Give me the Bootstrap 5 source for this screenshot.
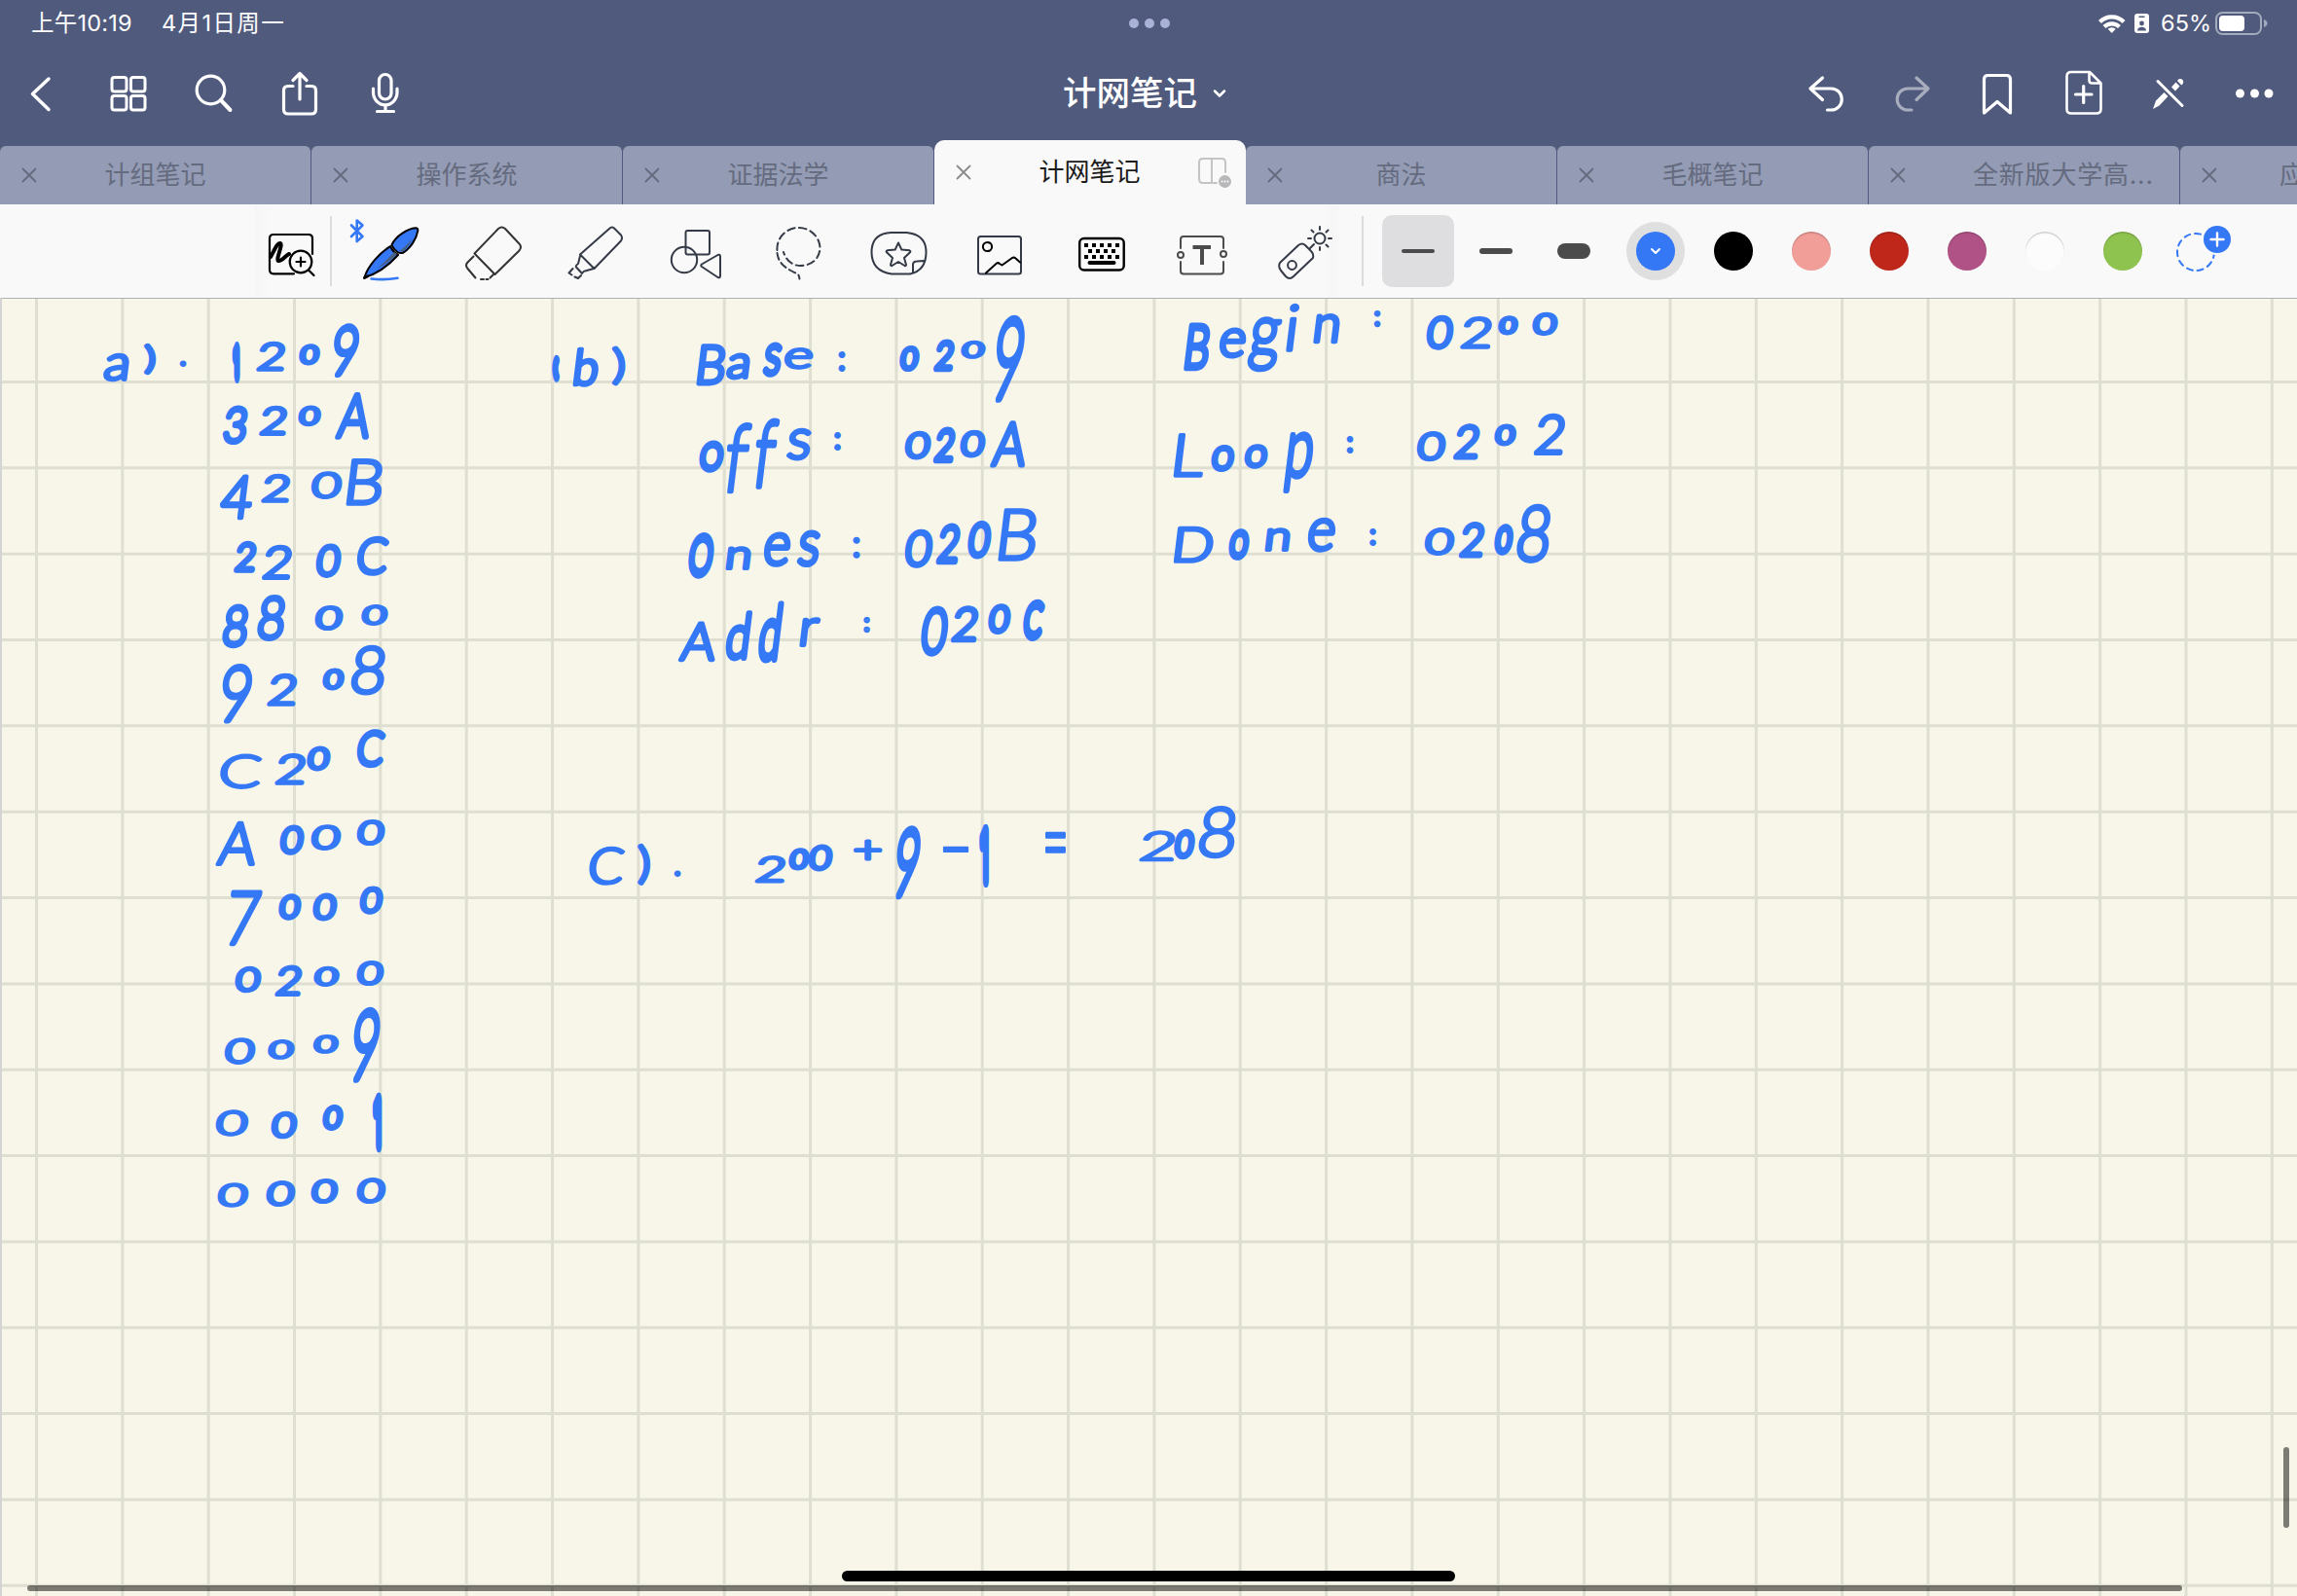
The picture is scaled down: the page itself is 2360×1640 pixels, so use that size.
<!DOCTYPE html>
<html lang="zh-CN">
<head>
<meta charset="utf-8">
<meta name="viewport" content="width=device-width, initial-scale=1">
<title>计网笔记</title>
<link href="https://cdn.jsdelivr.net/npm/bootstrap@5.3.0/dist/css/bootstrap.min.css" rel="stylesheet">
<style>
  body { width: 2360px; height: 1640px; font-family: Inter, "Noto Sans CJK SC", sans-serif; background: #f8f6e9; }
  svg { display: block; flex: none; overflow: visible; fill: none; stroke-linecap: round; stroke-linejoin: round; }
  .topbar { background: #505a7c; height: 210px; }
  .status-row { height: 48px; padding: 0 30px 0 32px; font-size: 23.5px; line-height: 48px; }
  .status-row .clock { width: 134px; letter-spacing: .2px; }
  .status-row .today { letter-spacing: 1.4px; }
  .side { flex: 1 1 0; }
  .action-row { height: 96px; }
  .action-row svg { stroke: #fff; stroke-width: 3.2; }
  .doc-title { font-size: 34.5px; font-weight: 500; line-height: 96px; }
  .tab-row { height: 66px; }
  .doc-tab { flex: none; width: 320px; height: 60px; background: #949bb4; border-right: 1.5px solid #505a7c; border-radius: 6px 6px 0 0; color: #656b7f; font-size: 26px; padding: 0 22px; }
  .doc-tab .label { flex: 1; text-align: center; white-space: nowrap; line-height: 60px; }
  .doc-tab .label.long { text-align: left; padding-left: 69px; letter-spacing: .8px; }
  .doc-tab .tail { width: 16px; }
  .doc-tab svg { stroke: #656b7f; stroke-width: 1.8; }
  .doc-tab.current { height: 66px; background: #f9f9f9; color: #1a1a1a; border: 0; border-radius: 10px 10px 0 0; }
  .doc-tab.current svg { stroke: #8a8a8a; }
  .doc-tab.current .label { line-height: 70px; padding-left: 11px; }
  .doc-tab .split { margin-right: -8px; }
  .toolbox { height: 97px; background: #f9f9f9; border-bottom: 1.5px solid #b0b0b3; }
  .toolbox .tools svg { stroke: #343a46; stroke-width: 2; }
  .lead-space { width: 262px; }
  .rule { width: 2px; height: 72px; background: #dcdcdd; }
  .shade { background: linear-gradient(90deg, #f6f6f6, #f9f9f9 16px); }
  .shade-end { background: linear-gradient(270deg, #f9f9f9 20px, #f6f6f6 28px, #f9f9f9 38px); }
  .widths { padding-left: 19px; gap: 6px; }
  .width-btn { width: 74px; height: 74px; border-radius: 10px; }
  .width-btn.chosen { background: #dedee0; }
  .width-btn i { width: 34px; background: #4b4b4b; border-radius: 8px; }
  .width-btn .thin { height: 4px; }
  .width-btn .medium { height: 5.5px; }
  .width-btn .thick { height: 16px; }
  .palette { padding-left: 27px; }
  .swatch { width: 40px; height: 40px; border-radius: 50%; margin-right: 40px; box-shadow: inset 0 1.5px 1px rgba(0,0,0,.18); }
  .swatch.picked { box-shadow: 0 0 0 10px #dfdfdf; background: #3478f6; }
  .paper { height: 1333px; background: #f8f6e9; }
  .ink text { font-weight: 300; fill: #3478f6; stroke: #3478f6; stroke-linejoin: round; }
  .vscroll { right: 8px; top: 1180px; width: 6px; height: 83px; background: rgba(0,0,0,.5); border-radius: 3px; }
  .hscroll { left: 28px; bottom: 5px; width: 2214px; height: 6px; background: rgba(0,0,0,.5); border-radius: 3px; }
  .home-bar { left: 865px; bottom: 15px; width: 630px; height: 11px; background: #000; border-radius: 6px; }
</style>
</head>
<body class="overflow-hidden m-0">
<header class="topbar text-white d-flex flex-column">
  <div class="status-row d-flex align-items-center">
    <div class="side d-flex"><span class="clock">上午10:19</span><span class="today">4月1日周一</span></div>
    <svg width="44" height="12" viewBox="1158 18 44 12"><g fill="#aab2d8"><circle cx="1164" cy="24" r="5"/><circle cx="1180" cy="24" r="5"/><circle cx="1196" cy="24" r="5"/></g></svg>
    <div class="side d-flex justify-content-end align-items-center">
      <svg width="64" height="48" viewBox="2156 0 64 48">
        <g stroke="#fff" stroke-width="4.2" stroke-linecap="butt"><path d="M2157.5 22.500a17 17 0 0 1 24.500 0"/><path d="M2162 27.500a11 11 0 0 1 15.500 0"/></g>
        <path d="M2169.700 34l-4-4.200a6 6 0 0 1 8 0z" fill="#fff"/>
        <rect x="2193" y="14" width="15" height="20" rx="3" fill="#fff"/><circle cx="2200.500" cy="24" r="2.400" fill="#505a7c"/><path d="M2196 31.500c0-5 9-5 9 0zM2197.500 16.500h6v1.500h-6z" fill="#505a7c"/>
      </svg>
      <span>65%</span>
      <svg class="ms-1" width="54" height="24" viewBox="2277 12 54 24"><rect x="2278" y="13" width="46" height="22" rx="6.500" stroke="#a3a9be" stroke-width="2"/><rect x="2281" y="16" width="26" height="16" rx="4" fill="#fff"/><path d="M2327 20q3.500 1.500 3.500 4t-3.500 4z" fill="#a3a9be"/></svg>
    </div>
  </div>
  <div class="action-row d-flex">
    <div class="side d-flex">
      <svg width="430" height="96" viewBox="0 48 430 96">
        <path d="M50 81L33.500 96.500 50 112.500" stroke-width="3.500"/>
        <g stroke-width="3"><rect x="115" y="79.500" width="15" height="14.500" rx="2.500"/><rect x="134.500" y="79.500" width="14.500" height="14.500" rx="2.500"/><rect x="115" y="98.500" width="15" height="14.500" rx="2.500"/><rect x="134.500" y="98.500" width="14.500" height="14.500" rx="2.500"/></g>
        <circle cx="216.500" cy="92.500" r="14.300"/><path d="M227 103l9.500 10" stroke-width="4"/>
        <path d="M301 88.500h-5q-4.500 0-4.500 4.500v19.500q0 4.500 4.500 4.500h24q4.500 0 4.500-4.500V93q0-4.500-4.500-4.500h-5M308 102V76m-7 6.500l7-7 7 7"/>
        <rect x="389.500" y="76.500" width="12.500" height="25.500" rx="6.200"/><path d="M383.500 91v4a12.200 12.700 0 0 0 24.500 0v-4M396 108v6M387.500 114.500h17"/>
      </svg>
    </div>
    <div class="d-flex align-items-center"><span class="doc-title">计网笔记</span>
      <svg width="38" height="96" viewBox="1231 48 38 96"><path d="M1249 93.500l5 5 5-5" stroke-width="2.500"/></svg></div>
    <div class="side d-flex justify-content-end">
      <svg width="520" height="96" viewBox="1840 48 520 96">
        <path d="M1872.500 80L1860 91l12.500 11.500M1861 91h20.500a10.800 11 0 0 1 0 22h-4"/>
        <g opacity=".5"><path d="M1969 80L1981 91l-12 11.500M1980.500 91h-20.500a10.800 11 0 0 0 0 22h4"/></g>
        <path d="M2038.500 116V81.500q0-4 4-4h19q4 0 4 4V116L2052 104.500z"/>
        <path d="M2147 74h-19q-4.500 0-4.500 4.500v33.500q0 4.500 4.500 4.500h26q4.500 0 4.500-4.500V85.500zM2146.500 74.500v8q0 3 3 3h8.500" stroke-width="2.600"/><path d="M2132.500 97h16.500M2140.700 88.500v17"/>
        <path d="M2217 83.500l25 25" stroke-width="3"/><g fill="#fff" stroke="none"><path d="M2212 112l3-8.500 8.500-8.500 4 4-9 9.500zM2231 89.500l4.500-5 4 4-4.500 5zM2237 83l1.500-1.700q2.500-1 4 .7 1.500 2 .3 4l-1.500 1.500z"/></g>
        <g fill="#fff" stroke="none"><circle cx="2301.500" cy="96" r="4.500"/><circle cx="2316.500" cy="96" r="4.500"/><circle cx="2331" cy="96" r="4.500"/></g>
      </svg>
    </div>
  </div>
  <nav class="tab-row d-flex align-items-end overflow-hidden">
    <div class="doc-tab d-flex align-items-center"><svg width="16" height="16"><path d="M1.500 1.500l13 13m0-13l-13 13"/></svg><span class="label">计组笔记</span><span class="tail"></span></div>
    <div class="doc-tab d-flex align-items-center"><svg width="16" height="16"><path d="M1.500 1.500l13 13m0-13l-13 13"/></svg><span class="label">操作系统</span><span class="tail"></span></div>
    <div class="doc-tab d-flex align-items-center"><svg width="16" height="16"><path d="M1.500 1.500l13 13m0-13l-13 13"/></svg><span class="label">证据法学</span><span class="tail"></span></div>
    <div class="doc-tab current d-flex align-items-center"><svg width="16" height="16"><path d="M1.500 1.500l13 13m0-13l-13 13"/></svg><span class="label">计网笔记</span>
      <svg class="split" width="36" height="32" viewBox="0 0 36 32"><path d="M20 27H6q-4 0-4-4V6q0-4 4-4h19q4 0 4 4v10M15 2v25" style="stroke:#c4c4c6;stroke-width:2"/><circle cx="28.500" cy="25.500" r="6.500" style="fill:#b9b9bb;stroke:none"/><path d="M25.500 25.500h0M28.500 25.500h0M31.500 25.500h0" style="stroke:#fff;stroke-width:1.800"/></svg></div>
    <div class="doc-tab d-flex align-items-center"><svg width="16" height="16"><path d="M1.500 1.500l13 13m0-13l-13 13"/></svg><span class="label">商法</span><span class="tail"></span></div>
    <div class="doc-tab d-flex align-items-center"><svg width="16" height="16"><path d="M1.500 1.500l13 13m0-13l-13 13"/></svg><span class="label">毛概笔记</span><span class="tail"></span></div>
    <div class="doc-tab d-flex align-items-center"><svg width="16" height="16"><path d="M1.500 1.500l13 13m0-13l-13 13"/></svg><span class="label long">全新版大学高...</span></div>
    <div class="doc-tab d-flex align-items-center"><svg width="16" height="16"><path d="M1.500 1.500l13 13m0-13l-13 13"/></svg><span class="label text-start ps-5 ms-3">应</span></div>
  </nav>
</header>

<section class="toolbox d-flex align-items-center">
  <div class="lead-space"></div>
  <div class="tools d-flex align-items-center">
    <svg class="shade" width="77" height="95" viewBox="262 210 77 95"><g style="stroke:#000;stroke-width:2.200"><path d="M302 280.300h-21q-4 0-4-4V244q0-4 4-4h36q4 0 4 4v16"/><path d="M278 263c4-7 7-15 10-14s-5 17-2 18 8-6 11-7" style="stroke-width:4"/><circle cx="309" cy="268" r="11.300"/><path d="M317 276.500l5.500 5.500M304.500 268h9M309 263.500v9"/></g></svg>
    <div class="rule"></div>
    <svg width="114" height="95" viewBox="341 210 114 95"><path d="M361 230.500l11.500 11.500-5.800 5V225.500l5.800 5-11.500 11.500" style="stroke:#3478f6;stroke-width:2.600"/>
      <path d="M374.500 284C378 272 390 259 401 252q2.500 6 8 9C400 271 389 280 374.500 284z" style="fill:#3478f6;stroke:#000"/><path d="M388 274.500q9-7.500 17-16.500l3 2q-8 9-20 14.500z" style="fill:#49607f;stroke:none"/>
      <path d="M402.500 250.500C407 241 419 234 427 233.200q2.500 0 2.300 3C428 244 422 254 414 258.800q-3 .8-5.500-.8-4-2.500-6-7.500z" style="fill:#3478f6;stroke:#000"/><path d="M410 257q8-5 13-12.500-1 6-9.500 13.300z" style="fill:#49607f;stroke:none"/>
      <path d="M374.500 284.500l3-1.500" style="stroke:#000;stroke-width:3"/><path d="M381.500 285.500q14 1.500 27-.8" style="stroke:#3478f6;stroke-width:2.600"/></svg>
    <svg width="104" height="95" viewBox="455 210 104 95"><g style="stroke:#333"><path d="M487.500 259.500L512 234q3.500-3 7 0l14.500 15.500q3 3 0 7L508.500 281z"/><path d="M486.500 262.500l-6 6q-3 3 0 6.500l8 9.500M494 286h3M499.500 286h2M503.500 284.500l3.500-3.500"/></g></svg>
    <svg width="104" height="95" viewBox="559 210 104 95"><path d="M596 260.500L626 234q3-3 5.500 0l6.500 6.500q2 3 0 6L610.500 275zM596 262l-2 8q-3 2-2 3.500l6 6.500q2-3 3-2.500l9-2.500M588.500 275l-4 4.500 3 2M590.500 283.500l3.500 1.500 3-3"/></svg>
    <svg width="104" height="95" viewBox="663 210 104 95"><rect x="704.500" y="236" width="24.500" height="24.500" rx="2"/><circle cx="703" cy="266" r="13.200"/><path d="M721 273q-1.500-1 0-2.500l16.500-9.500q2.500-.8 2.500 1.500v20q0 2.500-2.500 1.500z"/></svg>
    <svg width="104" height="95" viewBox="767 210 104 95"><path d="M798.500 256a22 21.500 0 0 1 44 -3c0 12-9 19-20 19-9 0-15-6-17.500-14" style="stroke-dasharray:7.500 4.500"/><path d="M798.500 259c1 8 5 13 13 17.500s9 3 10 9" style="stroke-dasharray:7 4"/></svg>
    <svg width="104" height="95" viewBox="871 210 104 95"><path d="M935 280.500h-19q-20.500-3-20.500-22.500 0-19 20-20h16q20 2 20 20 0 19-16.500 22.500zM938 279v-8q0-3.500 4-3.500l7.500-.5"/><path d="M923 248.500l3.300 7 8.200.8q1.500.7.500 2l-6 5.700 2 7q0 1.500-1.500 1l-6.500-4-6.500 4q-1.500.5-1.500-1l2-7-6-5.700q-1-1.300.5-2l8.200-.8z"/></svg>
    <svg width="104" height="95" viewBox="975 210 104 95"><rect x="1005" y="242" width="44" height="38.500" rx="2.500"/><g style="stroke:#000"><circle cx="1014.500" cy="252.500" r="4.600"/><path d="M1013 279.500l11-10q1.500-1 3 .5l2.500 1.500L1040 264q2-1 3.500.5l4.500 4"/></g></svg>
    <svg width="104" height="95" viewBox="1079 210 104 95"><g style="stroke:#000"><rect x="1109.200" y="244" width="45.500" height="32.500" rx="4.500" style="stroke-width:2.400"/><path d="M1114 251h36M1118 257h28M1114 263h36" style="stroke-width:4;stroke-linecap:butt;stroke-dasharray:4 4"/><path d="M1119.500 269h25" style="stroke-width:4"/></g></svg>
    <svg width="104" height="95" viewBox="1183 210 104 95"><g style="stroke:#4b4b4b"><path d="M1213 254v-9q0-3 3-3h38q3 0 3 3v9M1213 268v9.500q0 3 3 3h38q3 0 3-3V268"/><circle cx="1213" cy="261" r="3"/><circle cx="1257" cy="260" r="3"/><path d="M1225.500 253h18.500M1235 253v18" style="stroke-width:4;stroke-linecap:butt"/></g></svg>
    <svg class="shade-end" width="112" height="95" viewBox="1287 210 112 95"><path d="M1315 269l19-18q4-3 7 0l6 6q3 3 2 7l-20 19q-4 4-8 0l-5-6q-3-4-1-8z"/><circle cx="1327.500" cy="271.500" r="4.400"/><circle cx="1356" cy="244" r="5.500"/><path d="M1356 232v3M1356 253v3M1344 244h3M1365 244h3M1347.500 235.500l2 2M1362.500 250.500l2 2M1364.500 235.500l-2 2M1350 250l-4 4"/></svg>
    <div class="rule"></div>
  </div>
  <div class="widths d-flex align-items-center">
    <div class="width-btn chosen d-flex align-items-center justify-content-center"><i class="thin"></i></div>
    <div class="width-btn d-flex align-items-center justify-content-center"><i class="medium"></i></div>
    <div class="width-btn d-flex align-items-center justify-content-center"><i class="thick"></i></div>
  </div>
  <div class="palette d-flex align-items-center">
    <div class="swatch picked d-flex align-items-center justify-content-center"><svg width="12" height="8"><path d="M2 2l4 4 4-4" stroke="#fff" stroke-width="2"/></svg></div>
    <div class="swatch" style="background:#000"></div>
    <div class="swatch" style="background:#f19d98"></div>
    <div class="swatch" style="background:#bf271b"></div>
    <div class="swatch" style="background:#b05286"></div>
    <div class="swatch" style="background:#fcfcfc"></div>
    <div class="swatch" style="background:#8fc34f"></div>
    <svg width="64" height="95" viewBox="2245 210 64 95"><circle cx="2260" cy="258" r="19" stroke="#3478f6" stroke-width="2" stroke-dasharray="6 5"/><circle cx="2282" cy="245" r="16" fill="#f9f9f9"/><circle cx="2282" cy="245" r="14" fill="#3478f6"/><path d="M2275.500 245h13M2282 238.500v13" stroke="#fff" stroke-width="2.400"/></svg>
  </div>
</section>

<main class="paper position-relative">
  <svg width="2360" height="1333" viewBox="0 307 2360 1333"><g id="grid" stroke="#dedfd1" stroke-width="3" stroke-linecap="butt"></g><path d="M1 307v1333" stroke="#d4d4d6" stroke-width="2"/><g id="ink" class="ink"></g></svg>
  <div class="vscroll position-absolute"></div>
  <div class="hscroll position-absolute"></div>
  <div class="home-bar position-absolute"></div>
</main>

<script src="https://cdn.jsdelivr.net/npm/bootstrap@5.3.0/dist/js/bootstrap.bundle.min.js"></script>
<script>
  const NS = 'http://www.w3.org/2000/svg', PITCH = 88.34, PEN = 7;
  let d = '';
  for (let x = 37.5; x < 2360; x += PITCH) d += `M${x} 307V1640`;
  for (let y = 392.5; y < 1640; y += PITCH) d += `M0 ${y}H2360`;
  const lines = document.createElementNS(NS, 'path');
  lines.setAttribute('d', d);
  document.getElementById('grid').append(lines);

  // each word: its characters, then x, y, width, height of every character
  const words = [
    ['a).', 106,361,27,32, 143,351,22,35, 185,371,6,6],
    ['1209', 239,357,7,31, 264,349,30,34, 307,352,22,24, 341,332,28,56],
    ['320A', 229,415,26,42, 267,415,29,34, 306,415,24,24, 346,402,37,50],
    ['420B', 226,486,35,49, 269,485,30,33, 319,482,33,32, 357,469,38,52],
    ['220C', 241,555,23,34, 270,558,31,39, 324,557,27,37, 366,549,34,43],
    ['8800', 229,620,27,47, 265,610,29,50, 323,620,30,29, 371,619,28,25],
    ['9208', 226,681,33,63, 275,690,31,37, 331,685,23,25, 361,661,36,55],
    ['C20C', 225,772,45,40, 283,772,32,36, 315,765,25,28, 366,748,30,41],
    ['A000', 223,842,43,49, 287,846,26,33, 319,845,32,30, 366,840,30,30],
    ['7000', 233,913,35,60, 286,917,24,29, 321,916,26,31, 369,909,25,31],
    ['0200', 241,991,28,30, 283,990,28,35, 322,991,27,24, 366,985,29,29],
    ['0009', 230,1064,33,31, 274,1066,30,24, 321,1061,28,23, 361,1035,29,77],
    ['0001', 221,1138,35,31, 278,1140,28,31, 331,1134,22,28, 383,1128,9,51],
    ['0000', 223,1213,33,29, 273,1211,31,30, 319,1209,29,29, 366,1208,31,30],
    ['(b)', 567,367,8,24, 590,355,26,43, 626,354,19,44],
    ['Base:', 717,352,30,45, 746,361,25,30, 784,352,20,36, 805,355,31,26, 859,362,12,21],
    ['0209', 924,354,21,28, 960,348,21,34, 987,348,26,22, 1021,324,31,89],
    ['Offs:', 718,452,26,33, 744,432,27,76, 774,428,25,75, 808,439,26,36, 854,445,13,19],
    ['020A', 929,441,28,32, 960,438,22,38, 986,440,27,31, 1019,431,38,50],
    ['Ones:', 707,548,27,46, 746,560,26,27, 784,546,29,38, 819,544,24,40, 875,552,10,23],
    ['020B', 929,542,30,42, 963,537,24,43, 994,534,25,40, 1027,520,40,58],
    ['Addr:', 698,637,40,44, 746,627,25,53, 780,618,23,63, 822,633,21,33, 887,634,7,16],
    ['020C', 946,622,29,53, 978,621,28,40, 1015,619,24,33, 1051,616,22,41],
    ['Begin:', 1218,331,26,50, 1252,336,29,34, 1282,324,34,59, 1321,310,13,53, 1350,321,27,33, 1407,319,16,17],
    ['0200', 1465,322,29,38, 1501,323,33,37, 1539,323,21,22, 1574,319,27,27],
    ['Loop:', 1207,443,33,49, 1244,456,25,29, 1278,455,25,27, 1321,443,28,64, 1382,449,10,18],
    ['0202', 1455,441,31,34, 1494,434,27,39, 1535,434,23,25, 1577,423,32,46],
    ['Done:', 1207,539,41,41, 1262,543,22,32, 1300,541,26,27, 1343,531,30,38, 1406,544,9,18],
    ['0208', 1463,540,32,32, 1500,535,26,39, 1535,538,20,32, 1559,516,35,64],
    ['c).', 604,868,39,44, 654,865,15,46, 692,895,8,6],
    ['200+9-1', 776,877,32,32, 810,870,22,25, 830,866,26,30, 876,861,31,25, 919,849,26,74, 966,867,32,10, 1006,852,10,55],
    ['=', 1073,852,23,26],
    ['208', 1171,851,38,36, 1206,851,22,32, 1232,826,39,58]
  ];
  const ctx = document.createElement('canvas').getContext('2d');
  const STEM = 5;
  const ink = document.getElementById('ink');
  for (const [word, ...b] of words) {
    const g = document.createElementNS(NS, 'g');
    [...word].forEach((ch, i) => {
      const [x, y, w, h] = b.slice(i * 4, i * 4 + 4);
      const face = ch === '1' ? 'Inter, sans-serif' : 'Lato, "Open Sans", sans-serif';
      ctx.font = '300 100px ' + face;
      const m = ctx.measureText(ch);
      const mw = m.actualBoundingBoxLeft + m.actualBoundingBoxRight;
      const mh = m.actualBoundingBoxAscent + m.actualBoundingBoxDescent;
      const pen = '.:'.includes(ch) ? 5.5 : ch === '=' ? 4.5 : PEN;
      let sx = Math.max(w - pen + 1, 2) / mw, sy = Math.max(h - pen + 1, 2) / mh;
      if (ch === '1') sx = sy * .3;
      if (ch === '-') sy = sx;
      if (ch === '.') sx = sy = .28;
      if (ch === ':') sx = sy;
      if (ch === '=') sy *= .85;
      sx = Math.min(sx, sy * (ch === ')' ? 1.3 : 1.75));
      const s = Math.sqrt(sx * sy), rx = sx / s, ry = sy / s;
      const ox = (m.actualBoundingBoxRight - m.actualBoundingBoxLeft) / 2 * sx;
      const oy = (m.actualBoundingBoxAscent - m.actualBoundingBoxDescent) / 2 * sy;
      const lean = /[)(=+\-:.1]/.test(ch) ? 0 : -7;
      // wide characters get a lighter outline, narrow ones a heavier outline
      const weight = pen / Math.pow(rx, rx > 1 ? .6 : .7);
      const t = document.createElementNS(NS, 'text');
      t.setAttribute('font-family', face);
      t.setAttribute('font-size', 100 * s);
      t.setAttribute('stroke-width', Math.max(weight - STEM * s, 2));
      t.setAttribute('transform', `translate(${x + w / 2} ${y + h / 2}) skewX(${lean}) translate(${-ox} ${oy}) scale(${rx} ${ry})`);
      t.textContent = ch;
      g.append(t);
    });
    ink.append(g);
  }
</script>
</body>
</html>
